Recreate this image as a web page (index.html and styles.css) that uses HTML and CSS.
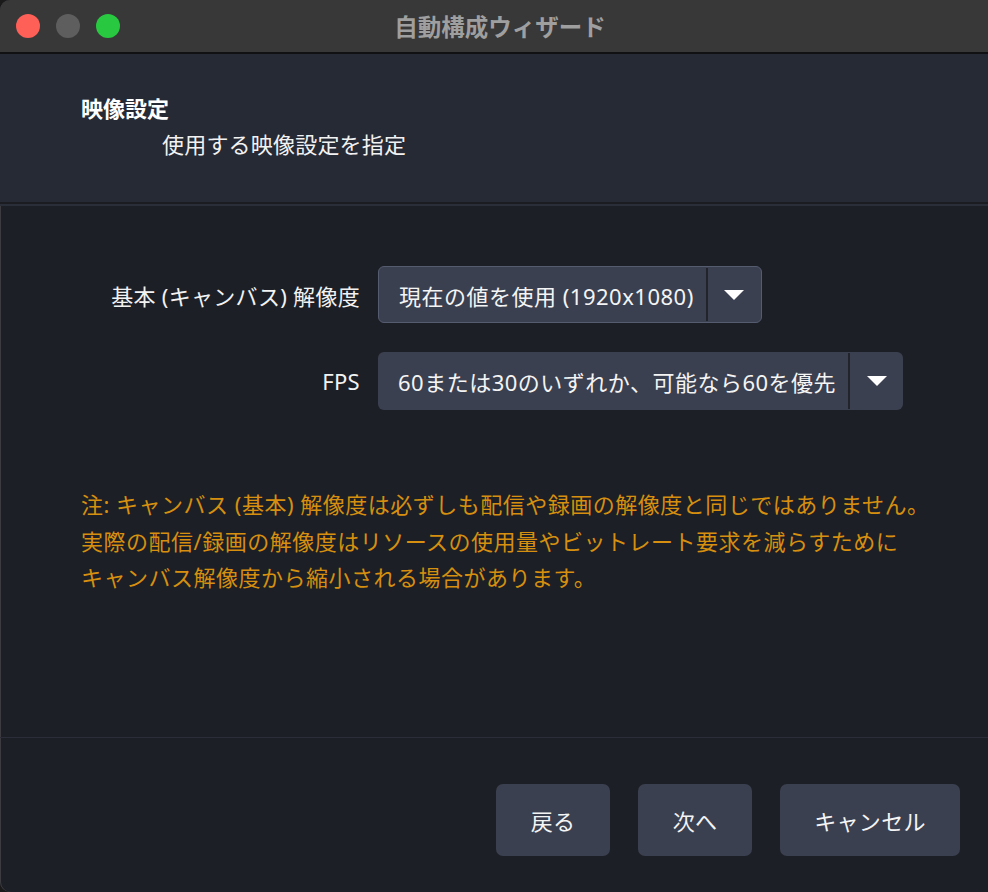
FILE: index.html
```html
<!DOCTYPE html>
<html lang="ja">
<head>
 <meta charset="UTF-8">
 <title>自動構成ウィザード</title>
 <link rel="stylesheet" href="styles.css">
</head>
<body>
 <div class="window">
  <div class="titlebar">
   <div class="lights">
    <span class="light red"></span>
    <span class="light gray"></span>
    <span class="light green"></span>
   </div>
   <div class="title">自動構成ウィザード</div>
  </div>

  <div class="header">
   <div class="page-title">映像設定</div>
   <div class="page-sub">使用する映像設定を指定</div>
  </div>

  <div class="content">
   <div class="form">
    <label class="form-label">基本 (キャンバス) 解像度</label>
    <div class="combo bordered">
     <span class="combo-text">現在の値を使用 (1920x1080)</span>
     <span class="combo-arrow"><i></i></span>
    </div>
    <label class="form-label">FPS</label>
    <div class="combo">
     <span class="combo-text">60または30のいずれか、可能なら60を優先</span>
     <span class="combo-arrow"><i></i></span>
    </div>
   </div>

   <p class="note">注: キャンバス (基本) 解像度は必ずしも配信や録画の解像度と同じではありません。<br>実際の配信/録画の解像度はリソースの使用量やビットレート要求を減らすために<br>キャンバス解像度から縮小される場合があります。</p>
  </div>

  <div class="footer">
   <button class="btn">戻る</button>
   <button class="btn">次へ</button>
   <button class="btn wide">キャンセル</button>
  </div>
 </div>
</body>
</html>
```

FILE: styles.css
```css
html, body {
margin: 0;
padding: 0;
background: #1a1a1a;
}
body {
font-family: "Noto Sans", "Noto Sans CJK JP", sans-serif;
color: #f2f2f2;
letter-spacing: 0.5px;
}
.window {
width: 988px;
height: 892px;
display: flex;
flex-direction: column;
background: #1d1f26;
border-radius: 10px 0 0 10px;
overflow: hidden;
box-shadow: inset 1px 0 0 #3c3c40;
}
.titlebar {
height: 52px;
flex: none;
display: flex;
align-items: center;
background: #383838;
border-bottom: 2px solid #111113;
}
.lights {
display: flex;
gap: 16px;
padding-left: 16px;
}
.light {
width: 24px;
height: 24px;
border-radius: 50%;
}
.red { background: #fe5f57; }
.gray { background: #5e5e5e; }
.green { background: #28c840; }
.title {
flex: 1;
text-align: center;
padding-left: 12px;
margin-left: -120px;
font-family: "Noto Sans CJK JP", sans-serif;
font-size: 23.5px;
font-weight: bold;
letter-spacing: 0;
color: #9f9f9f;
}
.header {
height: 112px;
flex: none;
padding-top: 36px;
padding-left: 81px;
background: #262a35;
border-bottom: 2px solid #1a1c22;
box-shadow: 0 2px 0 #2a2e39;
margin-bottom: 2px;
}
.page-title {
font-size: 22px;
font-weight: bold;
line-height: 36px;
letter-spacing: 0;
color: #ffffff;
}
.page-sub {
font-size: 22px;
line-height: 36px;
margin-left: 81px;
letter-spacing: 0.2px;
color: #f2f2f2;
}
.content {
flex: 1;
padding: 60px 0 0 81px;
border-bottom: 1px solid #2b2e38;
}
.form {
display: grid;
grid-template-columns: 279px auto;
column-gap: 18px;
row-gap: 29px;
align-items: center;
}
.form-label {
text-align: right;
font-size: 22px;
letter-spacing: 0.3px;
color: #f2f2f2;
}
.combo {
justify-self: start;
display: inline-flex;
align-items: stretch;
height: 58px;
background: #3b4050;
border-radius: 6px;
box-sizing: border-box;
}
.combo.bordered {
height: 57px;
border: 1px solid #555c70;
}
.combo-text {
display: flex;
align-items: center;
padding: 0 12px 0 20px;
font-size: 22px;
color: #f4f4f4;
white-space: nowrap;
}
.combo-arrow {
width: 53px;
margin: 1px 0;
border-left: 2px solid #22242c;
display: flex;
align-items: center;
justify-content: center;
}
.combo-arrow i {
width: 0;
height: 0;
border-left: 10px solid transparent;
border-right: 10px solid transparent;
border-top: 10px solid #ffffff;
}
.note {
margin: 76px 0 0 0;
font-size: 22px;
line-height: 36.5px;
color: #d68f0f;
}
.footer {
height: 154px;
flex: none;
box-sizing: border-box;
padding: 46px 28px 0 0;
display: flex;
justify-content: flex-end;
align-items: flex-start;
gap: 28px;
}
.btn {
width: 114px;
height: 72px;
border: none;
border-radius: 7px;
background: #3b4050;
color: #f4f4f4;
font-family: "Noto Sans", "Noto Sans CJK JP", sans-serif;
font-size: 22px;
letter-spacing: 0.3px;
cursor: pointer;
}
.btn.wide {
width: 180px;
}
```
